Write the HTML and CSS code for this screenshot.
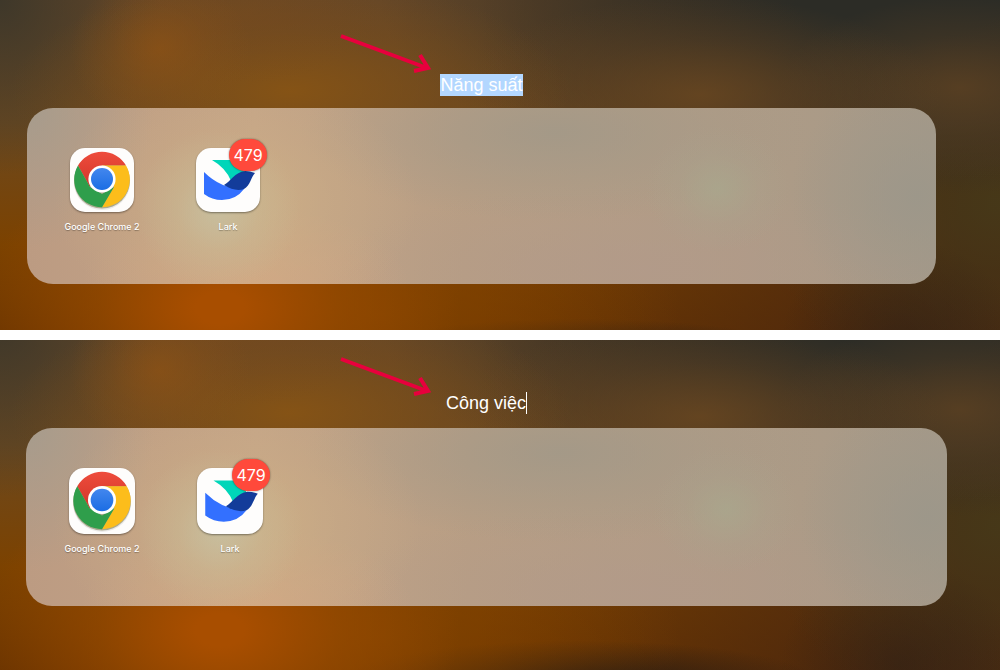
FILE: index.html
```html
<!DOCTYPE html>
<html lang="vi">
<head>
    <meta charset="UTF-8">
    <meta name="viewport" content="width=device-width, initial-scale=1.0">
    <title>Launchpad</title>
    <link rel="stylesheet" href="styles.css">
</head>
<body>
    <!-- Shared icon artwork -->
    <svg class="sprite" aria-hidden="true">
        <defs>
            <linearGradient id="redFill" x1="0" y1="0" x2="0" y2="1">
                <stop offset="0" stop-color="#ee4c3c"/>
                <stop offset="1" stop-color="#d2362a"/>
            </linearGradient>
            <linearGradient id="blueFill" x1="0" y1="0" x2="0" y2="1">
                <stop offset="0" stop-color="#4387ee"/>
                <stop offset="1" stop-color="#1b6de4"/>
            </linearGradient>
        </defs>
        <symbol id="chrome" viewBox="0 0 64 64">
            <ellipse cx="32" cy="35" rx="28" ry="27" fill="#000" opacity="0.08"/>
            <circle cx="32" cy="32.6" r="28" fill="#6b6a33" opacity="0.5"/>
            <path d="M8 17.6 A27.7 27.7 0 0 1 56 17.6 L32 17.6 L20 39 Z" fill="url(#redFill)"/>
            <path d="M56 17.6 A27.7 27.7 0 0 1 32 59.3 L44 39 L32 17.6 Z" fill="#fcbd1b"/>
            <path d="M32 59.3 A27.7 27.7 0 0 1 8 17.6 L20 39 L32 46 L44 39 Z" fill="#2f9e4b"/>
            <circle cx="32" cy="31" r="13.6" fill="#fff"/>
            <circle cx="32" cy="31" r="11" fill="url(#blueFill)"/>
        </symbol>
        <symbol id="lark" viewBox="0 0 64 64">
            <path d="M16 12 H40 Q46 17 48 24 L35 33 Q30 20 16 12 Z" fill="#00d6b9"/>
            <path d="M8 24 Q25 41 48 41 Q40 52 26 52 Q16 52 8 46 Z" fill="#3370ff"/>
            <path d="M28 37 C34 34 39 24 49 23 Q54 23 59 25 C55 29 54 38 48 41 Q39 44 28 37 Z" fill="#133c9a"/>
        </symbol>
        <symbol id="arrow" viewBox="0 0 96 42">
            <path d="M3 4 L89 36 M82 23 L90 36 L76 39" fill="none" stroke="#e8003d" stroke-width="4"/>
        </symbol>
    </svg>

    <!-- Folder with its name selected -->
    <section class="screen screen-selected">
        <svg class="arrow" aria-hidden="true"><use href="#arrow"/></svg>
        <div class="folder">
            <input class="folder-name" type="text" value="Năng suất" aria-label="Tên thư mục">
            <div class="panel">
                <button class="app" type="button">
                    <span class="icon">
                        <svg aria-hidden="true"><use href="#chrome"/></svg>
                    </span>
                    <span class="label">Google Chrome 2</span>
                </button>
                <button class="app" type="button">
                    <span class="icon">
                        <svg aria-hidden="true"><use href="#lark"/></svg>
                        <span class="badge">479</span>
                    </span>
                    <span class="label">Lark</span>
                </button>
            </div>
        </div>
    </section>

    <!-- Folder with the new name typed in -->
    <section class="screen screen-typing">
        <svg class="arrow" aria-hidden="true"><use href="#arrow"/></svg>
        <div class="folder">
            <input class="folder-name" type="text" value="Công việc" aria-label="Tên thư mục">
            <div class="panel">
                <button class="app" type="button">
                    <span class="icon">
                        <svg aria-hidden="true"><use href="#chrome"/></svg>
                    </span>
                    <span class="label">Google Chrome 2</span>
                </button>
                <button class="app" type="button">
                    <span class="icon">
                        <svg aria-hidden="true"><use href="#lark"/></svg>
                        <span class="badge">479</span>
                    </span>
                    <span class="label">Lark</span>
                </button>
            </div>
        </div>
    </section>
</body>
</html>
```

FILE: styles.css
```css
* {
    margin: 0;
    padding: 0;
    box-sizing: border-box;
}

body {
    display: flex;
    flex-direction: column;
    gap: 10px;
    min-height: 100vh;
    background: #fff;
    font-family: Inter, "Liberation Sans", sans-serif;
}

.sprite {
    position: absolute;
    width: 0;
    height: 0;
}

/* Blurred wallpaper */
.screen {
    position: relative;
    background-color: #553818;
    background-image:
        radial-gradient(ellipse 9% 22% at 16% 14%, rgba(142, 82, 20, 0.7), rgba(142, 82, 20, 0.25) 55%, transparent),
        radial-gradient(ellipse 14% 20% at 24% 4%, rgba(120, 74, 28, 0.5), transparent),
        radial-gradient(ellipse 28% 32% at 29% 26%, rgba(136, 84, 20, 0.9), rgba(126, 78, 24, 0.4) 55%, transparent),
        radial-gradient(ellipse 24% 28% at 70% 27%, rgba(108, 72, 32, 0.8), rgba(108, 72, 32, 0.3) 55%, transparent),
        radial-gradient(ellipse 18% 26% at 96% 25%, rgba(94, 66, 34, 0.8), rgba(94, 66, 34, 0.3) 55%, transparent),
        radial-gradient(ellipse 24% 46% at 22% 88%, rgba(168, 78, 0, 1) 10%, rgba(156, 76, 0, 0.6) 50%, transparent),
        radial-gradient(ellipse 30% 44% at 38% 90%, rgba(132, 68, 0, 0.8), transparent),
        radial-gradient(ellipse 12% 30% at 90% 98%, rgba(42, 30, 22, 0.5), transparent),
        radial-gradient(ellipse 24% 12% at 58% 103%, rgba(30, 24, 20, 0.9), transparent),
        radial-gradient(ellipse 52% 56% at 90% 0%, rgba(44, 44, 38, 1) 20%, rgba(54, 49, 38, 0.7) 60%, transparent),
        radial-gradient(ellipse 16% 50% at 0% 0%, rgba(58, 54, 42, 0.9), transparent),
        radial-gradient(ellipse 24% 56% at 100% 58%, rgba(70, 60, 26, 0.8), transparent),
        linear-gradient(to right, transparent 48%, rgba(66, 36, 18, 0.9) 96%),
        linear-gradient(#654728 0%, #6b4920 35%, #7c4200 70%, #6b3400 100%);
    background-size: 100% 350px;
}

.screen-selected {
    padding: 74px 64px 46px 27px;
}

.screen-typing {
    flex: 1;
    padding: 52px 53px 64px 26px;
    background-position: 0 -18px;
}

.folder {
    display: flex;
    flex-direction: column;
    align-items: center;
    gap: 12px;
}

.folder-name {
    field-sizing: content;
    height: 22px;
    border: 0;
    outline: 0;
    background: transparent;
    color: #fff;
    font-family: "Liberation Sans", Arial, sans-serif;
    font-size: 18px;
    line-height: 22px;
}

.screen-selected .folder-name {
    background: #b3d7ff;
}

.screen-typing .folder-name {
    border-right: 1px solid #fff;
}

.panel {
    display: grid;
    grid-template-columns: repeat(auto-fill, 126px);
    align-items: start;
    width: 100%;
    min-height: 176px;
    padding: 40px 12px;
    border-radius: 26px;
    background-color: #b29c86;
    background-image:
        radial-gradient(ellipse 9% 46% at 21% 58%, rgba(198, 194, 164, 0.8), rgba(198, 190, 156, 0.35) 50%, transparent),
        radial-gradient(ellipse 20% 72% at 23% 54%, rgba(208, 178, 132, 0.8), rgba(206, 174, 132, 0.35) 55%, transparent),
        radial-gradient(ellipse 18% 44% at 24% 100%, rgba(216, 168, 130, 0.7), transparent),
        radial-gradient(ellipse 8% 36% at 76% 46%, rgba(168, 168, 142, 0.7), rgba(168, 164, 142, 0.25) 55%, transparent),
        radial-gradient(ellipse 28% 50% at 58% 14%, rgba(160, 152, 136, 0.8), transparent),
        radial-gradient(ellipse 14% 70% at 98% 50%, rgba(156, 151, 138, 0.9), transparent),
        radial-gradient(ellipse 34% 50% at 68% 92%, rgba(178, 154, 138, 0.8), transparent),
        radial-gradient(ellipse 14% 80% at 0% 0%, rgba(164, 156, 142, 0.9), transparent),
        linear-gradient(to right, #bc9b82 0%, #c4a588 25%, #b89e84 48%, #b09c86 75%, #a59988 100%);
}

.screen-typing .folder {
    gap: 14px;
}

.screen-typing .panel {
    grid-template-columns: repeat(auto-fill, 128px);
    min-height: 178px;
}

.app {
    display: flex;
    flex-direction: column;
    align-items: center;
    gap: 9px;
    border: 0;
    background: none;
    color: #fff;
    font-family: inherit;
}

.icon {
    position: relative;
    width: 64px;
    height: 64px;
    border-radius: 15px;
    background: #fefdfc;
    box-shadow: 0 1px 2px rgba(0, 0, 0, 0.4);
}

.icon svg {
    display: block;
    width: 100%;
    height: 100%;
}

.screen-typing .icon {
    width: 66px;
    height: 66px;
}

.badge {
    position: absolute;
    top: -9px;
    right: -7px;
    width: 38px;
    height: 32px;
    border-radius: 16px;
    background: #ff493b;
    box-shadow: 0 0 2px rgba(0, 0, 0, 0.5);
    font-size: 16px;
    line-height: 32px;
    text-align: center;
}

.label {
    font-size: 9px;
    font-weight: 500;
    line-height: 12px;
    text-shadow: 0 1px 1px rgba(0, 0, 0, 0.3);
}

/* Pointer to the folder name */
.arrow {
    position: absolute;
    top: 32px;
    left: 338px;
    width: 96px;
    height: 42px;
}

.screen-typing .arrow {
    top: 15px;
}
```
